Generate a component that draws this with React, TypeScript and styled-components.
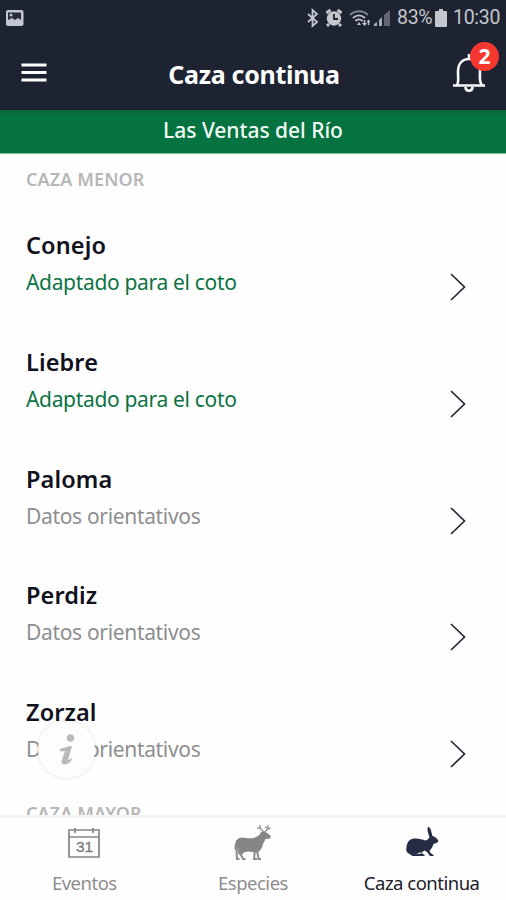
import React from 'react';
import styled, { createGlobalStyle } from 'styled-components';

const GlobalStyle = createGlobalStyle`
  * { box-sizing: border-box; }
  body { margin: 0; background: #fefefe; font-family: "Noto Sans", "Open Sans", sans-serif; }
  h1, h2, h3, p { margin: 0; }
  button { border: 0; padding: 0; background: none; font: inherit; color: inherit; }
  svg { display: block; flex: none; }
`;

const Screen = styled.div`
  width: 506px;
  height: 900px;
  display: flex;
  flex-direction: column;
  overflow: hidden;
  background: #fefefe;
`;

const StatusBar = styled.div`
  height: 36px;
  flex: none;
  display: flex;
  align-items: center;
  justify-content: space-between;
  padding: 0 6px 1px 5px;
  background: #1e2332;
  color: #c3c6cc;
`;

const StatusGroup = styled.div`
  display: flex;
  align-items: center;
`;

const StatusText = styled.span<{ $width: number; $gap: number }>`
  width: ${p => p.$width}px;
  margin-left: ${p => p.$gap}px;
  font: 400 19.5px/24px Roboto, sans-serif;
  letter-spacing: -0.3px;
  white-space: nowrap;
`;

const Header = styled.header`
  height: 74px;
  flex: none;
  display: grid;
  grid-template-columns: 60px 1fr 60px;
  align-items: center;
  background: #1e2332;
  color: #fff;
`;

const Title = styled.h1`
  font-size: 25px;
  line-height: 32px;
  font-weight: 700;
  text-align: center;
  letter-spacing: -0.3px;
  padding: 1px 0 0 2px;
`;

const MenuButton = styled.button`
  height: 100%;
  padding-left: 21px;
  display: flex;
  align-items: center;
`;

const BellButton = styled.button`
  position: relative;
  height: 100%;
  padding: 0 0 2px 6px;
  display: flex;
  align-items: center;
`;

const Badge = styled.span`
  position: absolute;
  left: 24px;
  top: 6px;
  width: 29px;
  height: 29px;
  border-radius: 50%;
  background: #f6372f;
  font-size: 21px;
  line-height: 28px;
  font-weight: 700;
  text-align: center;
`;

const Banner = styled.div`
  height: 44px;
  flex: none;
  background: linear-gradient(#056238, #05733f 5px);
  border-bottom: 1px solid #7fbf9f;
  color: #f2fbf5;
  font-size: 21px;
  line-height: 41px;
  font-weight: 500;
  text-align: center;
  letter-spacing: -0.03px;
`;

const List = styled.main`
  position: relative;
  flex: 1;
  min-height: 0;
  overflow: hidden;
`;

const SectionTitle = styled.h2`
  height: 50px;
  padding: 0 26px;
  color: #b7b7b7;
  font-size: 18px;
  line-height: 50px;
  font-weight: 600;
  letter-spacing: 0.1px;
`;

const Row = styled.div`
  height: 116.8px;
  padding: 23px 39px 0 26px;
  display: flex;
  justify-content: space-between;
`;

const Name = styled.h3`
  color: #11121d;
  font-size: 23.5px;
  line-height: 37px;
  font-weight: 600;
  letter-spacing: 0.1px;
`;

const Detail = styled.p<{ $adapted: boolean }>`
  color: ${p => (p.$adapted ? '#0c7444' : '#8e8e8e')};
  font-size: 21px;
  line-height: 37px;
  letter-spacing: -0.33px;
`;

const Chevron = styled.svg`
  margin-top: 44px;
`;

const InfoButton = styled.button`
  position: absolute;
  left: 38px;
  bottom: 37px;
  width: 57px;
  height: 57px;
  border-radius: 50%;
  background: #fdfdfd;
  box-shadow: 0 0 4px rgba(0, 0, 0, 0.12);
  display: flex;
  align-items: center;
  justify-content: center;
`;

const TabBar = styled.nav`
  height: 85px;
  flex: none;
  display: grid;
  grid-template-columns: 1fr 1fr 1fr;
  border-top: 3px solid #f4f4f4;
`;

const Tab = styled.button<{ $active?: boolean }>`
  display: flex;
  flex-direction: column;
  align-items: center;
  padding-top: 6px;
  color: ${p => (p.$active ? '#20212a' : '#8d8d8d')};
  font-size: 18.5px;
  line-height: 28px;
  letter-spacing: -0.5px;
  svg { margin-bottom: 7px; }
`;

const species = [
  { name: 'Conejo', adapted: true },
  { name: 'Liebre', adapted: true },
  { name: 'Paloma', adapted: false },
  { name: 'Perdiz', adapted: false },
  { name: 'Zorzal', adapted: false },
];

const StatusIcons = () => (
  <svg width="88" height="20" viewBox="0 0 88 20" fill="none">
    <path d="M2 6l9 8-4.500 4V2l4.500 4-9 8" stroke="#c3c6cc" strokeWidth="1.800" />
    <circle cx="28" cy="10.500" r="7.200" fill="#c3c6cc" />
    <path d="M20.500 5l4-3M35.500 5l-4-3M23 16l-2 2M33 16l2 2" stroke="#c3c6cc" strokeWidth="3" />
    <path d="M28 6v5h4" stroke="#1e2332" strokeWidth="1.800" />
    <path d="M44 7c5-5 13-5 18 0" stroke="#7d828c" strokeWidth="1.800" />
    <path d="M47 10c4-3.500 8-3.500 12 0M49.500 13c2-2 5-2 7 0" stroke="#c3c6cc" strokeWidth="1.900" />
    <path d="M53 14l2 3h-4z" fill="#c3c6cc" />
    <path d="M58.500 12v4M62.500 13v4" stroke="#c3c6cc" strokeWidth="1.500" />
    <path d="M56 15h5l-2.500 3zM60.500 14l2-2.500 2 2.500z" fill="#c3c6cc" />
    <path d="M68 18v-2l3-2v4zM73 18v-6l3-3v9z" fill="#a5a8b0" />
    <path d="M78 18V7l6-5v16z" fill="#60656f" />
  </svg>
);

const Deer = () => (
  <svg width="38" height="38" viewBox="0 0 38 38">
    <path fill="#858585" d="M3 16c2-3 5-3 9-2 4 0 7 1 10-1 3-1 4-3 5-5l3-1 3 2 4 3-1 2.500-4.500.500-2.500 5c-.500 4-2.500 6-4.500 8l-1 1-8-1.500-5 .500-3 3-3-.500-.500-3 .500-3-.500-2c-1 2-2 3-3 4-1-4 0-7 1.500-10.500z" />
    <path fill="none" stroke="#8b8b8b" strokeWidth="2" d="M4 22L2.500 28l.5 7h2.500M7 26l-1 3 3 6h2.500M21 26l-1 9h3M23 26l1.500 9H27" />
    <path fill="none" stroke="#9b9b9b" strokeWidth="1.400" d="M29.500 8l-3-3.500L23 4M26.500 4.500L25.500 1M31 8l3-3.500V1M34 4.500L31 3M34 5l2.500-1" />
  </svg>
);

const Rabbit = () => (
  <svg width="36" height="38" viewBox="0 0 36 38">
    <path fill="#252c43" d="M2.500 23c.500-6 4-8.500 9-8.500 4 0 7 1 10 2 2-.500 3-2 4-3-1-3-2-6-2-8.500 0-3 2-2.500 3 0l2 7c3 .500 5 3 6 5-1 2-3 2.500-5 3-1 3-2 5-4 6.500l1 2.500 3 2v1h-3.500l-3-4-2.500-1.500-3 2 2 2h1v1.500H8.500L4 29c-2-1-2-3-1.500-6z" />
    <path fill="#d4d5da" d="M12.500 30l4-2 1 2z" />
  </svg>
);

const Calendar = () => (
  <svg width="34" height="38" viewBox="0 0 34 38" fill="none" stroke="#858585">
    <path strokeWidth="1.700" d="M2 6h30v27H2zM2 13h30M8 4v5M26 4v5" />
    <text x="17.500" y="28" textAnchor="middle" fill="#7b7b7b" stroke="#7b7b7b" strokeWidth="0.300" fontFamily="Liberation Sans" fontSize="15.500" letterSpacing="0">31</text>
  </svg>
);

export default function App() {
  return (
    <Screen>
      <GlobalStyle />
      <StatusBar>
        <svg width="20" height="18" viewBox="0 0 20 18">
          <rect x="1" y="1" width="17.500" height="16" rx="2" fill="#c3c6d0" />
          <path d="M3 3.500h13v7.500l-3-2-3 2-3-2-4 2z" fill="#272c3b" />
          <circle cx="6" cy="6" r="1.500" fill="#c3c6d0" />
        </svg>
        <StatusGroup>
          <StatusIcons />
          <StatusText $width={38} $gap={3}>83%</StatusText>
          <svg width="12" height="18" viewBox="0 0 12 18"><path fill="#c3c6cc" d="M0 3q0-1 1-1h3V0h4v2h3q1 0 1 1v14q0 1-1 1H1q-1 0-1-1z" /></svg>
          <StatusText $width={47} $gap={6}>10:30</StatusText>
        </StatusGroup>
      </StatusBar>
      <Header>
        <MenuButton aria-label="Menú">
          <svg width="26" height="20" viewBox="0 0 26 20"><path d="M0.500 2h25M0.500 9.500h25M0.500 17h25" stroke="#fff" strokeWidth="3" /></svg>
        </MenuButton>
        <Title>Caza continua</Title>
        <BellButton aria-label="Notificaciones">
          <svg width="34" height="42" viewBox="0 0 34 42" fill="none" stroke="#f8f9fc" strokeWidth="2.600">
            <path d="M1 34.500h32M5 34c2-3 1-6 1-13 0-8 4-13 11-13s11 5 11 13c0 7-1 10 2 13M17 8V3" />
            <path d="M13.500 36c0 5 7 5 7 0" />
          </svg>
          <Badge>2</Badge>
        </BellButton>
      </Header>
      <Banner>Las Ventas del Río</Banner>
      <List>
        <SectionTitle>CAZA MENOR</SectionTitle>
        {species.map(s => (
          <Row key={s.name}>
            <div>
              <Name>{s.name}</Name>
              <Detail $adapted={s.adapted}>{s.adapted ? 'Adaptado para el coto' : 'Datos orientativos'}</Detail>
            </div>
            <Chevron width="18" height="30" viewBox="0 0 18 30" fill="none" stroke="#252735" strokeWidth="1.700">
              <path d="M2 3l13.500 13L2 29" />
            </Chevron>
          </Row>
        ))}
        <SectionTitle>CAZA MAYOR</SectionTitle>
        <InfoButton aria-label="Información">
          <svg width="18" height="32" viewBox="0 0 18 32">
            <circle cx="12.500" cy="4" r="3.700" fill="#b9b9b9" />
            <path d="M2 15c4-1 8-3 12-3l-4 14 4-2-1 3c-3 4-10 5-9.500 0l3.500-10-5 .500z" fill="#b9b9b9" />
          </svg>
        </InfoButton>
      </List>
      <TabBar>
        <Tab><Calendar />Eventos</Tab>
        <Tab><Deer />Especies</Tab>
        <Tab $active><Rabbit />Caza continua</Tab>
      </TabBar>
    </Screen>
  );
}
